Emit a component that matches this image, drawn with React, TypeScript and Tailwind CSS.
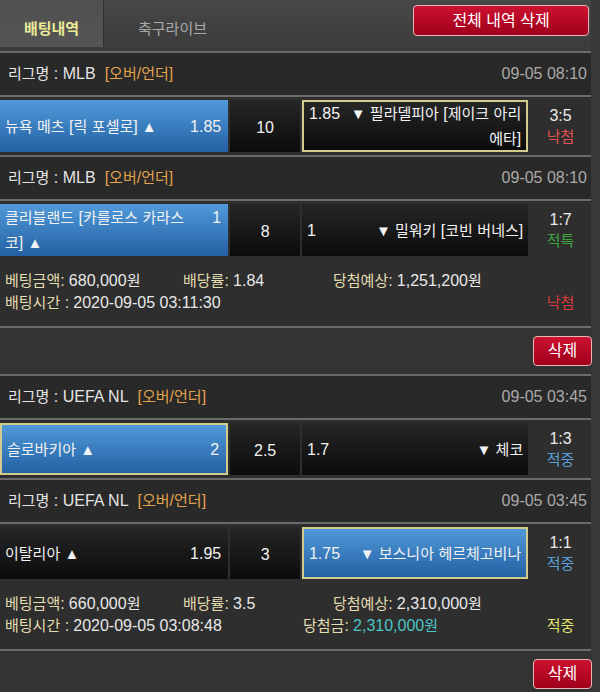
type Game = {
  league: string;
  date: string;
  home: string;
  homeOdds: string;
  line: string;
  awayOdds: string;
  away: string;
  score: string;
  result: string;
  resultColor: string;
  blue: "home" | "away";
  pick: "home" | "away" | null;
};

type Slip = {
  games: Game[];
  amount: string;
  rate: string;
  expected: string;
  time: string;
  won: string | null;
  status: string;
  statusColor: string;
};

const slips: Slip[] = [
  {
    games: [
      {
        league: "MLB",
        date: "09-05 08:10",
        home: "뉴욕 메츠 [릭 포셀로]",
        homeOdds: "1.85",
        line: "10",
        awayOdds: "1.85",
        away: "필라델피아 [제이크 아리 에타]",
        score: "3:5",
        result: "낙첨",
        resultColor: "text-[#e05252]",
        blue: "home",
        pick: "away",
      },
      {
        league: "MLB",
        date: "09-05 08:10",
        home: "클리블랜드 [카를로스 카라스 코]",
        homeOdds: "1",
        line: "8",
        awayOdds: "1",
        away: "밀워키 [코빈 버네스]",
        score: "1:7",
        result: "적특",
        resultColor: "text-[#3fa53f]",
        blue: "home",
        pick: null,
      },
    ],
    amount: "680,000원",
    rate: "1.84",
    expected: "1,251,200원",
    time: "2020-09-05 03:11:30",
    won: null,
    status: "낙첨",
    statusColor: "text-[#d83b3b]",
  },
  {
    games: [
      {
        league: "UEFA NL",
        date: "09-05 03:45",
        home: "슬로바키아",
        homeOdds: "2",
        line: "2.5",
        awayOdds: "1.7",
        away: "체코",
        score: "1:3",
        result: "적중",
        resultColor: "text-[#5b9fd8]",
        blue: "home",
        pick: "home",
      },
      {
        league: "UEFA NL",
        date: "09-05 03:45",
        home: "이탈리아",
        homeOdds: "1.95",
        line: "3",
        awayOdds: "1.75",
        away: "보스니아 헤르체고비나",
        score: "1:1",
        result: "적중",
        resultColor: "text-[#5b9fd8]",
        blue: "away",
        pick: "away",
      },
    ],
    amount: "660,000원",
    rate: "3.5",
    expected: "2,310,000원",
    time: "2020-09-05 03:08:48",
    won: "2,310,000원",
    status: "적중",
    statusColor: "text-[#e2e26e]",
  },
];

// latin/digits a bit larger than hangul, like the original font
const T = ({ s }: { s: string }) => (
  <>
    {s.split(/([\uAC00-\uD7A3]+)/).map((p, i) =>
      i % 2 ? (
        <span key={i}>{p}</span>
      ) : p ? (
        <span key={i} className="text-[16px]">
          {p}
        </span>
      ) : null
    )}
  </>
);

const Line = () => <div className="h-[2px] w-[591px] bg-[#6b6b6b]" />;

const cellBg = (blue: boolean, pick: boolean) =>
  [
    blue
      ? "bg-linear-to-b from-[#519ada] to-[#2361a3]"
      : "bg-linear-to-b from-[#262626] to-[#0c0c0c]",
    pick ? "border-2 border-[#d2cb8c]" : "",
  ].join(" ");

const GameBlock = ({ g }: { g: Game }) => (
  <>
    <div className="flex h-[42px] w-[591px] items-center justify-between bg-[#292929] pl-[8px] pr-[4px]">
      <div className="text-[#e4e4e4]">
        <T s={`리그명 : ${g.league}`} />
        <span className="ml-[9px] text-[#e3a24c]">
          <T s="[오버/언더]" />
        </span>
      </div>
      <div className="text-[16px] text-[#a9a9a9]">{g.date}</div>
    </div>
    <Line />
    <div className="w-[591px] bg-[#2e2e2e] py-[3px]">
      <div className="flex h-[52px] gap-[2px] text-[#f2f2f2]">
        <div
          className={`flex w-[229px] items-center pl-[5px] pr-[7px] ${cellBg(
            g.blue === "home",
            g.pick === "home"
          )}`}
        >
          <div className="flex w-full items-start justify-between gap-2 leading-[25px]">
            <span>
              <T s={g.home} /> <span className="text-[15px]">▲</span>
            </span>
            <span className="text-[16px]">{g.homeOdds}</span>
          </div>
        </div>
        <div className="flex w-[70px] items-center justify-center bg-linear-to-b from-[#262626] to-[#0c0c0c] pt-[3px] text-[16px]">
          {g.line}
        </div>
        <div
          className={`flex w-[227px] items-center pl-[5px] pr-[5px] ${cellBg(
            g.blue === "away",
            g.pick === "away"
          )}`}
        >
          <div className="flex w-full items-start gap-[2px] leading-[25px]">
            <span className="text-[16px]">{g.awayOdds}</span>
            <span className="flex-1 text-right">
              <span className="text-[15px]">▼</span> <T s={g.away} />
            </span>
          </div>
        </div>
        <div className="flex w-[61px] flex-col items-center justify-center leading-[21px]">
          <span className="text-[16px] text-[#ececec]">{g.score}</span>
          <span className={g.resultColor}>{g.result}</span>
        </div>
      </div>
    </div>
  </>
);

const Label = ({ s }: { s: string }) => (
  <span className="text-[#e3dcae]">
    <T s={s} />
  </span>
);

const SlipBlock = ({ s }: { s: Slip }) => (
  <>
    {s.games.map((g, i) => (
      <div key={i}>
        <Line />
        <GameBlock g={g} />
      </div>
    ))}
    <div className="w-[591px] bg-[#2e2e2e] pb-[12px] pl-[5px] pt-[11px] leading-[22px] text-[#e8e8e8]">
      <div className="flex">
        <span className="w-[178px]">
          <Label s="베팅금액:" /> <T s={s.amount} />
        </span>
        <span className="w-[150px]">
          <Label s="배당률:" /> <T s={s.rate} />
        </span>
        <span>
          <Label s="당첨예상:" /> <T s={s.expected} />
        </span>
      </div>
      <div className="flex">
        <span className="w-[298px]">
          <Label s="배팅시간 :" /> <T s={s.time} />
        </span>
        <span className="flex-1">
          {s.won && (
            <>
              <Label s="당첨금:" />{" "}
              <span className="text-[#4cc4c4]">
                <T s={s.won} />
              </span>
            </>
          )}
        </span>
        <span className={`w-[61px] text-center ${s.statusColor}`}>
          {s.status}
        </span>
      </div>
    </div>
    <Line />
    <div className="flex h-[46px] w-[592px] items-start justify-end bg-[#333333] pt-[8px]">
      <button className="h-[30px] w-[59px] rounded-[4px] border-[1.5px] border-[#e8b4b4] bg-linear-to-b from-[#cc1230] to-[#a0001b] text-[16px] text-white">
        삭제
      </button>
    </div>
  </>
);

export default function App() {
  return (
    <div className="h-[692px] w-[600px] overflow-hidden bg-[#383838] font-['Liberation_Sans','Noto_Sans_CJK_KR',sans-serif] text-[15px]">
      <div className="flex h-[51px] w-[591px] items-start bg-linear-to-b from-[#474747] to-[#3b3b3b]">
        <div className="flex h-[47px] w-[104px] items-center justify-center border-r border-[#303030] bg-linear-to-b from-[#4f4f4f] to-[#555555] pt-[12px] font-semibold text-[#ebeb96]">
          배팅내역
        </div>
        <div className="ml-[34px] flex h-[47px] items-center pt-[12px] text-[#a9a9a9]">
          축구라이브
        </div>
        <button className="ml-auto mr-[2px] mt-[5px] h-[31px] w-[176px] rounded-[4px] border-[1.5px] border-[#e8b4b4] bg-linear-to-b from-[#cc1230] to-[#a0001b] text-[16px] text-white">
          전체 내역 삭제
        </button>
      </div>
      {slips.map((s, i) => (
        <SlipBlock key={i} s={s} />
      ))}
      <Line />
    </div>
  );
}
